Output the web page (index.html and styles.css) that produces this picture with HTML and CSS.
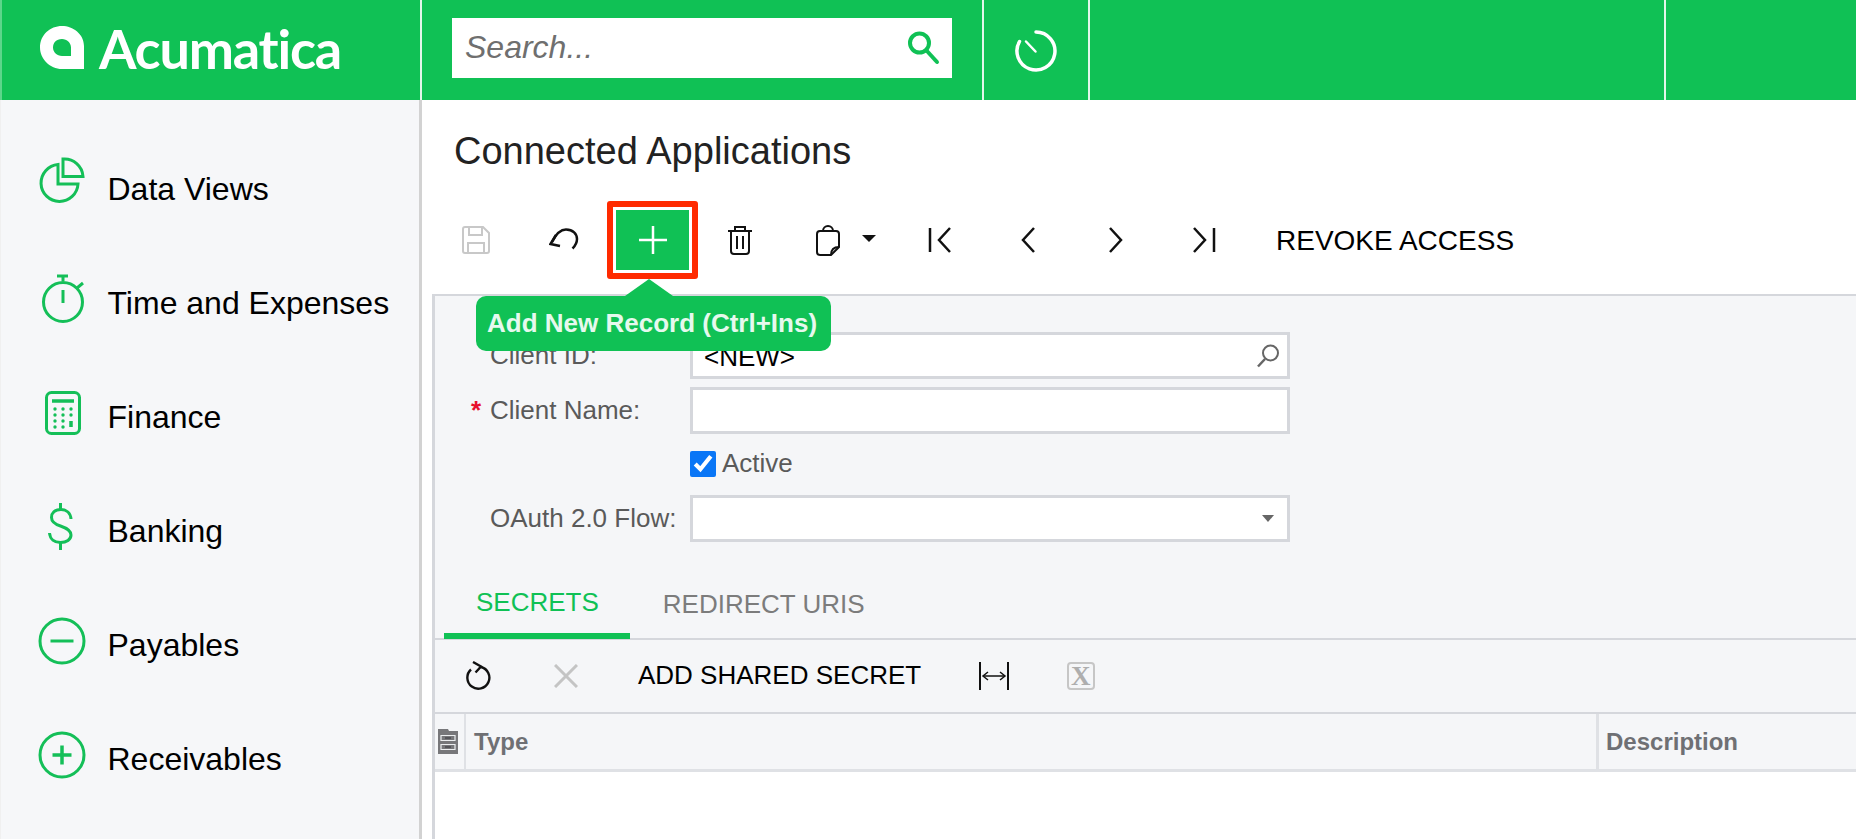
FILE: index.html
```html
<!DOCTYPE html>
<html lang="en">
<head>
  <meta charset="UTF-8" />
  <meta name="viewport" content="width=device-width, initial-scale=1.0" />
  <title>Connected Applications</title>
  <link rel="stylesheet" href="styles.css">
</head>
<body>

  <header class="topbar">
    <div class="brand">
      <svg class="brand-mark" width="44" height="43" viewBox="0 0 44 43">
        <path fill="#fff" fill-rule="evenodd" d="M22 0C33 0 44 8 44 20V43H22C10 43 0 33 0 21.500C0 9 10 0 22 0ZM22 13C16 13 13 17 13 21.500C13 26 17 30 22 30H31V21.500C31 17 27 13 22 13Z"/>
      </svg>
      <span class="brand-name">Acumatica</span>
    </div>
    <div class="search-cell">
      <div class="search">
        <input class="search-input" placeholder="Search...">
        <svg width="34" height="34" viewBox="0 0 34 34" fill="none" stroke="#10c155" stroke-width="4">
          <circle cx="12.500" cy="12" r="9.500"/>
          <path d="M19.500 19.500L30 31" stroke-linecap="round"/>
        </svg>
      </div>
    </div>
    <div class="timer-cell">
      <svg width="42" height="42" viewBox="0 0 42 42" fill="none" stroke="#fff" stroke-width="3.500" stroke-linecap="round">
        <path d="M21 2A19 19 0 1 1 4.500 11.500"/>
        <path d="M11 11.500L20.500 21.500" stroke-width="2.500"/>
      </svg>
    </div>
    <div class="top-fill"></div>
    <div class="top-last"></div>
  </header>

  <div class="shell">
    <nav class="sidebar">
      <a class="nav-item nav-views">
        <svg class="nav-icon" width="48" height="48" viewBox="0 0 48 48">
          <path d="M20 7.500A18.500 18.500 0 1 0 40 27H20Z"/>
          <path d="M25 2V19.500H45A18.500 18.500 0 0 0 25 2Z"/>
        </svg>
        <span>Data Views</span>
      </a>
      <a class="nav-item">
        <svg class="nav-icon" width="48" height="54" viewBox="0 0 48 54">
          <circle cx="25" cy="30" r="19.500"/>
          <path d="M19 4H30M25 4V9M39 16L45 11M25 18V31"/>
        </svg>
        <span>Time and Expenses</span>
      </a>
      <a class="nav-item">
        <svg class="nav-icon" width="48" height="44" viewBox="0 0 48 44">
          <rect x="8.500" y="1.500" width="33" height="41" rx="5"/>
          <path d="M14 10H36M33 30V36" stroke-width="3.500"/>
          <g class="calc-keys">
            <circle cx="17" cy="18" r="1.700"/><circle cx="25" cy="18" r="1.700"/><circle cx="33" cy="18" r="1.700"/>
            <circle cx="17" cy="24" r="1.700"/><circle cx="25" cy="24" r="1.700"/><circle cx="33" cy="24" r="1.700"/>
            <circle cx="17" cy="30" r="1.700"/><circle cx="25" cy="30" r="1.700"/>
            <circle cx="17" cy="36" r="1.700"/><circle cx="25" cy="36" r="1.700"/>
          </g>
        </svg>
        <span>Finance</span>
      </a>
      <a class="nav-item">
        <svg class="nav-icon" width="48" height="48" viewBox="1.500 1 48 48">
          <path d="M34.500 17C34 11 30 7.500 24.500 7.500C18 7.500 15 11 15 15.500C15 20 18 22 24 24C30 26 34.500 28.500 34.500 33C34.500 37.500 30 40.500 24 40.500C18 40.500 13.500 37 13 31"/>
          <path d="M24 0V8M24 40V48"/>
        </svg>
        <span>Banking</span>
      </a>
      <a class="nav-item">
        <svg class="nav-icon" width="48" height="48" viewBox="0 0 48 48">
          <circle cx="24" cy="24" r="22"/>
          <path d="M12.500 24H35.500"/>
        </svg>
        <span>Payables</span>
      </a>
      <a class="nav-item">
        <svg class="nav-icon" width="48" height="48" viewBox="0 0 48 48">
          <circle cx="24" cy="24" r="22"/>
          <path d="M14.500 24H33.500M24 14.500V33.500" stroke-width="3.500"/>
        </svg>
        <span>Receivables</span>
      </a>
    </nav>

    <main class="content">
      <h1 class="page-title">Connected Applications</h1>

      <div class="toolbar">
        <button class="tool">
          <svg width="30" height="30" viewBox="0 0 30 30" fill="none" stroke="#c8c8c8" stroke-width="2">
            <path d="M4 2H22L28 8V26A2 2 0 0 1 26 28H4A2 2 0 0 1 2 26V4A2 2 0 0 1 4 2Z"/>
            <path d="M8 2V10H21V2M7 28V18H23V28"/>
          </svg>
        </button>
        <button class="tool">
          <svg width="30" height="24" viewBox="0 0 30 24" fill="none" stroke="#111" stroke-width="2.500">
            <path d="M3 14C7 6 11 1.500 17 1.500C24 1.500 28 6 28 11C28 14 26 18 23.500 20.500"/>
            <path d="M7 7L1.500 16L11 18"/>
          </svg>
        </button>
        <div class="tool-wrap">
          <button class="tool-add" title="Add New Record">
            <svg width="30" height="30" viewBox="0 0 30 30" stroke="#fff" stroke-width="2.500">
              <path d="M1 15H29M15 1V29"/>
            </svg>
          </button>
          <div class="tip">Add New Record (Ctrl+Ins)</div>
        </div>
        <button class="tool">
          <svg width="26" height="30" viewBox="0 0 26 30" fill="none" stroke="#111" stroke-width="2">
            <path d="M1 6H25M8 6V2H18V6M4 6V26A3 3 0 0 0 7 29H19A3 3 0 0 0 22 26V6M10 11V24M16 11V24"/>
          </svg>
        </button>
        <button class="tool tool-split">
          <svg width="26" height="32" viewBox="0 0 26 32" fill="none" stroke="#111" stroke-width="2">
            <path d="M8 7A5 5 0 0 1 18 7"/>
            <path d="M5 7H21A3 3 0 0 1 24 10V23L16 31H5A3 3 0 0 1 2 28V10A3 3 0 0 1 5 7Z"/>
            <path d="M16 31C16 26 19 23 24 23"/>
          </svg>
          <span class="caret"></span>
        </button>
        <button class="tool">
          <svg width="24" height="26" viewBox="0 0 24 26" fill="none" stroke="#111" stroke-width="2.500">
            <path d="M2 1V25M22 1L11 13L22 25"/>
          </svg>
        </button>
        <button class="tool">
          <svg width="16" height="26" viewBox="0 0 16 26" fill="none" stroke="#111" stroke-width="2.500">
            <path d="M14 1L3 13L14 25"/>
          </svg>
        </button>
        <button class="tool">
          <svg width="16" height="26" viewBox="0 0 16 26" fill="none" stroke="#111" stroke-width="2.500">
            <path d="M2 1L13 13L2 25"/>
          </svg>
        </button>
        <button class="tool">
          <svg width="24" height="26" viewBox="0 0 24 26" fill="none" stroke="#111" stroke-width="2.500">
            <path d="M22 1V25M2 1L13 13L2 25"/>
          </svg>
        </button>
        <button class="tool-text">REVOKE ACCESS</button>
      </div>

      <section class="panel">
        <form class="form">
          <div class="row row-id">
            <span class="req"></span>
            <label class="label">Client ID:</label>
            <div class="field">
              <input class="field-input" value="&lt;NEW&gt;">
              <svg width="24" height="24" viewBox="0 0 24 24" fill="none" stroke="#666" stroke-width="2">
                <circle cx="14.500" cy="9" r="7.500"/>
                <path d="M9 15L2 22.500" stroke-width="2.500"/>
              </svg>
            </div>
          </div>
          <div class="row row-name">
            <span class="req">*</span>
            <label class="label">Client Name:</label>
            <div class="field"><input class="field-input"></div>
          </div>
          <div class="row row-check">
            <span class="req"></span>
            <span class="label"></span>
            <input class="check" type="checkbox" checked>
            <label class="check-label">Active</label>
          </div>
          <div class="row">
            <span class="req"></span>
            <label class="label">OAuth 2.0 Flow:</label>
            <div class="field">
              <input class="field-input">
              <span class="field-caret"></span>
            </div>
          </div>
        </form>

        <div class="tabs">
          <div class="tab active">SECRETS</div>
          <div class="tab">REDIRECT URIS</div>
        </div>

        <div class="grid-toolbar">
          <button class="tool">
            <svg width="26" height="30" viewBox="0 0 26 30" fill="none" stroke="#111" stroke-width="2.400">
              <path d="M5 8.500A11 11 0 1 0 15 6"/>
              <path d="M7 1L15 5.500L9.500 11.500"/>
            </svg>
          </button>
          <button class="tool">
            <svg width="24" height="24" viewBox="0 0 24 24" fill="none" stroke="#c4c4c4" stroke-width="3">
              <path d="M1 1L23 23M23 1L1 23"/>
            </svg>
          </button>
          <button class="tool-text">ADD SHARED SECRET</button>
          <button class="tool">
            <svg width="32" height="28" viewBox="0 0 32 28" fill="none" stroke="#111" stroke-width="2">
              <path d="M2 0V28M30 0V28"/>
              <path d="M5 14H27" stroke-width="1.500"/>
              <path d="M10 10L5 14L10 18M22 10L27 14L22 18" stroke-width="1.500"/>
            </svg>
          </button>
          <button class="tool"><span class="excel">X</span></button>
        </div>

        <div class="grid-head">
          <div class="col-icon">
            <svg width="20" height="25" viewBox="0 0 20 25">
              <path fill="#77777a" d="M0 0H10L11 2H20V25H0Z"/>
              <path fill="none" stroke="#eceef0" stroke-width="1.200" d="M3 6.500H17V11.500H3ZM3 15.500H17V20.500H3Z"/>
              <path fill="#55555a" d="M7 8H13V10H7ZM7 17H13V19H7Z"/>
            </svg>
          </div>
          <div class="col col-type">Type</div>
          <div class="col col-desc">Description</div>
        </div>
        <div class="grid-body"></div>
      </section>
    </main>
  </div>

</body>
</html>
```

FILE: styles.css
```css
* {
  box-sizing: border-box;
}

html,
body {
  height: 100%;
}

body {
  margin: 0;
  overflow: hidden;
  display: flex;
  flex-direction: column;
  font-family: "Liberation Sans", Arial, sans-serif;
  color: #000;
  background: #fff;
}

button {
  font-family: inherit;
  padding: 0;
  border: none;
  background: none;
}

/* top bar */
.topbar {
  display: flex;
  flex: 0 0 100px;
  background: #10c155;
}

.brand {
  display: flex;
  align-items: center;
  width: 422px;
  padding: 0 0 0 38px;
  border-left: 2px solid #5cd68b;
  border-right: 2px solid #e2f7ea;
}

.brand-mark {
  margin-top: -5px;
}

.brand-name {
  margin-left: 15px;
  margin-top: -4px;
  font-family: Lato, sans-serif;
  font-size: 54px;
  font-weight: 700;
  letter-spacing: -1.200px;
  color: #fff;
}

.search-cell {
  display: flex;
  width: 562px;
  padding: 18px 0 0 30px;
  border-right: 2px solid #e2f7ea;
}

.search {
  display: flex;
  align-items: center;
  width: 500px;
  height: 60px;
  padding: 0 11px 0 13px;
  background: #fff;
}

.search-input {
  flex: 1;
  min-width: 0;
  border: none;
  outline: none;
  font-family: inherit;
  font-size: 32px;
  font-style: italic;
  padding: 0 0 2px;
}

.search-input::placeholder {
  color: #6f6f6f;
  opacity: 1;
}

.timer-cell {
  display: flex;
  align-items: center;
  justify-content: center;
  width: 106px;
  padding-top: 2px;
  border-right: 2px solid #e2f7ea;
}

.top-fill {
  width: 576px;
  border-right: 2px solid #e2f7ea;
}

.top-last {
  flex: 1;
}

/* layout below the bar */
.shell {
  display: flex;
  flex: 1;
  min-height: 0;
}

.sidebar {
  width: 422px;
  padding-top: 32px;
  background: #f6f7f9;
  border-left: 1px solid #f0f0f0;
  border-right: 3px solid #d2d2d2;
}

.nav-item {
  display: flex;
  align-items: center;
  height: 114px;
  padding-left: 37px;
  font-size: 32px;
}

.nav-item span {
  margin-left: 21.500px;
}

.nav-icon {
  margin-top: -9px;
  fill: none;
  stroke: #14bf58;
  stroke-width: 3;
}

.nav-views .nav-icon {
  margin-top: -16px;
}

.calc-keys {
  fill: #14bf58;
  stroke: none;
}

.content {
  display: flex;
  flex: 1;
  flex-direction: column;
  min-width: 0;
}

.page-title {
  display: flex;
  align-items: center;
  height: 101px;
  margin: 0;
  padding: 2px 0 0 32px;
  font-size: 38px;
  font-weight: 400;
  color: #222;
}

/* main toolbar */
.toolbar {
  display: flex;
  align-items: center;
  height: 78px;
  margin-bottom: 15px;
  padding-left: 10px;
}

.tool {
  display: flex;
  align-items: center;
  justify-content: center;
  flex: 0 0 88px;
  height: 60px;
}

.tool-split {
  flex-basis: 112px;
  justify-content: flex-start;
  padding-left: 31px;
}

.caret {
  margin-left: 21px;
  margin-top: -4px;
  border-top: 7px solid #111;
  border-left: 7.500px solid transparent;
  border-right: 7.500px solid transparent;
}

.tool-wrap {
  position: relative;
  flex: 0 0 88px;
  min-width: 0;
  height: 78px;
}

.tool-add {
  display: flex;
  align-items: center;
  justify-content: center;
  width: 91px;
  height: 78px;
  margin-left: -1px;
  border: 6px solid #ff2a00;
  border-radius: 3px;
  background: #10c155;
  box-shadow: inset 0 0 0 3px #fff;
}

.tip {
  position: absolute;
  z-index: 5;
  top: 95px;
  left: -132px;
  width: 355px;
  height: 55px;
  padding-left: 11px;
  line-height: 55px;
  font-size: 26px;
  font-weight: 700;
  color: #e6f9ee;
  white-space: nowrap;
  background: #10c155;
  border-radius: 10px;
}

.tip::before {
  content: "";
  position: absolute;
  top: -17px;
  left: 149px;
  border-bottom: 17px solid #10c155;
  border-left: 24px solid transparent;
  border-right: 24px solid transparent;
}

.tool-text {
  margin-left: 28px;
  padding-top: 1px;
  font-size: 28px;
  color: #000;
  white-space: nowrap;
}

/* form panel */
.panel {
  display: flex;
  flex: 1;
  flex-direction: column;
  min-height: 0;
  margin-left: 10px;
  background: #f5f6f8;
  border-top: 2px solid #d5d7dc;
  border-left: 3px solid #d5d7dc;
}

.form {
  padding: 36px 0 0 36px;
}

.row {
  display: flex;
  align-items: center;
  font-size: 26px;
  color: #5a5a5a;
  white-space: nowrap;
}

.row-id {
  margin-bottom: 8px;
}

.row-name {
  margin-bottom: 17px;
}

.row-check {
  height: 26px;
  margin-bottom: 18px;
}

.req {
  width: 19px;
  color: #e8112d;
  font-weight: 700;
}

.label {
  width: 200px;
}

.field {
  display: flex;
  align-items: center;
  width: 600px;
  height: 47px;
  padding: 0 7px 0 11px;
  background: #fff;
  border: 3px solid #d5d7dc;
}

.field-input {
  flex: 1;
  min-width: 0;
  padding: 3px 0 0;
  border: none;
  outline: none;
  font-family: inherit;
  font-size: 26px;
  color: #000;
}

.field-caret {
  margin-right: 6px;
  border-top: 7px solid #666;
  border-left: 6.500px solid transparent;
  border-right: 6.500px solid transparent;
}

.check {
  width: 26px;
  height: 26px;
  margin: 0 6px 0 0;
  accent-color: #0a76f6;
}

.check-label {
  margin-top: -2px;
}

/* tabs */
.tabs {
  display: flex;
  align-items: flex-start;
  height: 54px;
  margin-top: 44px;
  padding-left: 9px;
  font-size: 26px;
  color: #7c7c7c;
  border-bottom: 2px solid #d5d7dc;
}

.tab {
  height: 52px;
  padding: 3px 33px 0;
  line-height: 30px;
}

.tab.active {
  height: 53px;
  padding: 1px 31px 0 32px;
  color: #10c155;
  border-bottom: 6px solid #10c155;
}

/* grid */
.grid-toolbar {
  display: flex;
  align-items: center;
  height: 74px;
  border-bottom: 2px solid #d5d7dc;
}

.grid-toolbar .tool {
  flex-basis: 87px;
  height: 60px;
}

.grid-toolbar .tool-text {
  margin: -2px 29px 0;
  padding: 0;
  font-size: 26px;
}

.excel {
  display: flex;
  align-items: center;
  justify-content: center;
  width: 28px;
  height: 28px;
  font-family: "Liberation Serif", serif;
  font-size: 27px;
  font-weight: 700;
  color: #aeaeae;
  border: 2.500px solid #c6c6c6;
  border-radius: 4px;
}

.grid-head {
  display: flex;
  height: 58px;
  font-size: 24px;
  font-weight: 700;
  color: #6f7074;
  border-bottom: 3px solid #dfe1e5;
}

.col-icon {
  display: flex;
  align-items: center;
  justify-content: center;
  width: 31px;
  padding-right: 3px;
  border-right: 2px solid #dfe1e5;
}

.col {
  display: flex;
  align-items: center;
  padding-left: 8px;
}

.col-type {
  width: 1133px;
  border-right: 3px solid #dfe1e5;
}

.col-desc {
  padding-left: 7px;
}

.grid-body {
  flex: 1;
  background: #fff;
}
```
